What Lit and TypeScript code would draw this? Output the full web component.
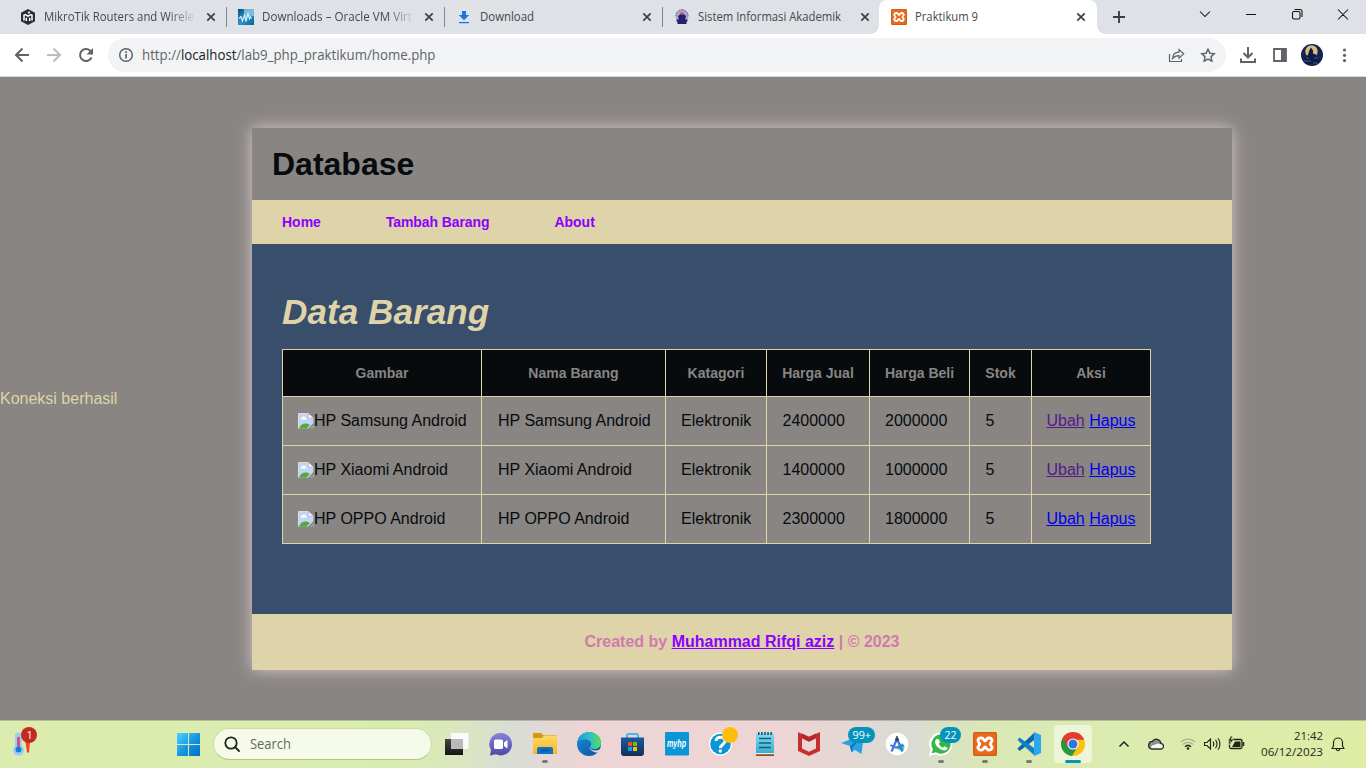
import { LitElement, html, css } from "lit";
import { customElement } from "lit/decorators.js";
import { classMap } from "lit/directives/class-map.js";

// A label stretched to an exact run length, for the system UI typeface.
const label = (text: unknown, width: number, cls: string, height = 20, base = 14) => html`
  <svg class=${cls} width=${width + 1} height=${height}>
    <text x="0" y=${base} textLength=${width} lengthAdjust="spacingAndGlyphs">${text}</text>
  </svg>`;

const xamppIcon = (size: number) => html`
  <svg width=${size} height=${size} viewBox="0 0 16 16">
    <rect width="16" height="16" rx="1.2" fill="#ea6a1c" />
    <rect x=".5" y=".5" width="15" height="15" rx="1" fill="none" stroke="#c9581a" stroke-width=".7" />
    <path d="M5.200 4h-.2a1.700 1.700 0 0 0-1.200 2.900c.9.800.9 1.400 0 2.200a1.700 1.700 0 0 0 1.200 2.900h.8c1.300 0 1.200-2 2.200-2s.9 2 2.200 2h.8a1.700 1.700 0 0 0 1.200-2.900c-.9-.8-.9-1.400 0-2.200a1.700 1.700 0 0 0-1.200-2.900h-.8c-1.300 0-1.200 2-2.200 2s-.9-2-2.200-2z"
      fill="none" stroke="#fff" stroke-width="1.900" stroke-linejoin="round" />
  </svg>`;

const closeIcon = html`
  <svg class="close" width="10" height="10" viewBox="0 0 10 10">
    <path d="M1.300 1.300l7.400 7.400M8.700 1.300L1.300 8.700" stroke="#3c4043" stroke-width="1.700" />
  </svg>`;

@customElement("browser-tabs")
class BrowserTabs extends LitElement {
  static styles = css`
    :host { display: block; height: 34px; background: #dee1e6; font-family: "Open Sans", "Noto Sans", sans-serif; }
    svg { display: block; flex: none; overflow: visible; }
    .strip { display: flex; height: 34px; padding-left: 8px; }
    .tab { display: flex; align-items: center; box-sizing: border-box; width: 218px; padding-left: 12px; position: relative; }
    .line::after { content: ""; position: absolute; right: -1px; top: 7px; width: 1px; height: 20px; background: #80868b; }
    .title { flex: 1; min-width: 0; margin-left: 8px; }
    .text { font-size: 12px; fill: #45484c; }
    .fade { -webkit-mask-image: linear-gradient(90deg, #000 125px, transparent 153px); mask-image: linear-gradient(90deg, #000 125px, transparent 153px); }
    .close { margin-right: 10px; }
    .active .close { margin-right: 11px; }
    .active { background: #fff; border-radius: 8px 8px 0 0; margin-left: -1px; }
    .active::before, .active::after { content: ""; position: absolute; bottom: 0; width: 8px; height: 8px; }
    .active::before { left: -8px; background: radial-gradient(circle at 0 0, transparent 7.5px, #fff 8px); }
    .active::after { right: -8px; background: radial-gradient(circle at 100% 0, transparent 7.5px, #fff 8px); }
    .plus { margin: 10px 0 0 15px; }
    .controls { display: flex; margin-left: auto; }
  `;
  render() {
    const tabs = [
      { t: "MikroTik Routers and Wirele", w: 150, fade: true, icon: html`<svg width="16" height="16" viewBox="0 0 16 16">
          <path d="M8 0l7 3.800v8.400L8 16l-7-3.800V3.800z" fill="#272f38" />
          <path d="M4 11.500V6.200L5.200 5.500 8 7.200l2.800-1.700 1.200.7v5.300M6.300 12V8.800M9.700 12V8.800M8 4l1.800-1" fill="none" stroke="#fff" stroke-width="1.500" /></svg>` },
      { t: "Downloads – Oracle VM Virt", w: 150, fade: true, icon: html`<svg width="16" height="16" viewBox="0 0 16 16">
          <defs><linearGradient id="vb" x2="1" y2="1"><stop stop-color="#0b4a80" /><stop offset=".5" stop-color="#2d94cd" /><stop offset="1" stop-color="#0a5c98" /></linearGradient></defs>
          <rect width="16" height="16" fill="url(#vb)" /><path d="M6 0h10v7L6 9z" fill="#9ed5ef" opacity=".65" />
          <path d="M1 9.500l2-2 1.500 4.500 2-6 1.500 6.500 2-8 1.500 5.500 1-2 1 1.500" fill="none" stroke="#d7f2fc" stroke-width="1.100" /></svg>` },
      { t: "Download", w: 54, icon: html`<svg width="16" height="16" viewBox="0 0 16 16">
          <path d="M6 2h4v4h3.200L8 11.200 2.800 6H6zM3 13h10v1.300H3z" fill="#1a73e8" /></svg>` },
      { t: "Sistem Informasi Akademik", w: 143, icon: html`<svg width="16" height="16" viewBox="0 0 16 16">
          <path d="M8 .5c4 0 6.500 3 6.500 6.500 0 2-.7 3-1.500 4H3C2.200 10 1.500 9 1.500 7 1.500 3.500 4 .5 8 .5z" fill="#a9a7cb" />
          <path d="M8 .8c3.700 0 6 2.800 6 6.200M2 7C2 3.600 4.300.8 8 .8" fill="none" stroke="#6b68a8" stroke-dasharray="1 .7" />
          <path d="M4 7l4-3 4 3-1 4H5zM2.500 10.500h11v2h-1v2.500h-9v-2.500h-1z" fill="#24206f" /><circle cx="8" cy="4.300" r="1.500" fill="#e4554b" /></svg>` },
      { t: "Praktikum 9", w: 63, active: true, icon: xamppIcon(16) },
    ];
    return html`<div class="strip">
      ${tabs.map((t, i) => html`<div class=${classMap({ tab: true, active: !!t.active, line: i < 3 })}>
        ${t.icon}<div class=${classMap({ title: true, fade: !!t.fade })}>${label(t.t, t.w, "text", 20, 14)}</div>${closeIcon}
      </div>`)}
      <svg class="plus" width="14" height="14" viewBox="0 0 14 14"><path d="M7 1v12M1 7h12" stroke="#3c4043" stroke-width="1.900" /></svg>
      <div class="controls">
        <svg width="184" height="34" viewBox="1182 0 184 34" fill="none" stroke="#111" stroke-width="1.050">
          <path d="M1200 11.500l5 5 5-5M1246 14.500h10M1338 9.500l10 10M1348 9.500l-10 10" />
          <rect x="1292.500" y="11.500" width="7.500" height="7.500" rx="1.500" />
          <path d="M1294.500 9.500h5.500a2 2 0 0 1 2 2v5.500" />
        </svg>
      </div>
    </div>`;
  }
}

@customElement("browser-toolbar")
class BrowserToolbar extends LitElement {
  static styles = css`
    :host { display: block; font-family: "Open Sans", "Noto Sans", sans-serif; }
    svg { display: block; flex: none; overflow: visible; }
    .bar { box-sizing: border-box; height: 43px; background: #fff; border-bottom: 1px solid #d5d6d9; display: flex; align-items: center; }
    .omni { display: flex; align-items: center; width: 1118px; height: 34px; border-radius: 17px; background: #f1f3f4; }
    .url { margin-left: 8px; font-size: 14px; fill: #5f6368; }
    .host { fill: #202124; }
    .share { margin-left: auto; }
  `;
  render() {
    return html`<div class="bar">
      <svg width="108" height="42" viewBox="0 34 108 42" fill="none" stroke="#5f6368" stroke-width="2">
        <path d="M29 55H16.500M22.500 48.500L16 55l6.500 6.500" />
        <path d="M47 55h12.500M53.500 48.500L60 55l-6.500 6.500" stroke="#babcbe" />
        <path d="M91.500 57.500a6 6 0 1 1-1.300-6.800l1.500 1.500" /><path d="M93 48v6.500h-6.500z" fill="#5f6368" stroke="none" />
      </svg>
      <div class="omni">
        <svg width="26" height="34" viewBox="108 38 26 34"><circle cx="126" cy="55" r="6.300" fill="none" stroke="#5f6368" stroke-width="1.500" /><path d="M125.200 54h1.700v4.500h-1.700zM125.200 51.300h1.700v1.600h-1.700z" fill="#5f6368" /></svg>
        <svg class="url" width="300" height="24"><text x="0" y="17" textLength="293.500" lengthAdjust="spacingAndGlyphs">http://<tspan class="host">localhost</tspan>/lab9_php_praktikum/home.php</text></svg>
        <svg class="share" width="66" height="34" viewBox="1160 38 66 34" fill="none" stroke="#5f6368">
          <path d="M1169.500 54v7.500h12V59" stroke-width="1.200" />
          <path d="M1172.500 58.500c.3-4 2.500-6.200 6.500-6.300v-2.700l4.700 4.300-4.700 4.300v-2.500c-3 0-4.800.9-6.500 2.900z" stroke-width="1.200" />
          <path d="M1208 49.300l1.900 4 4.300.5-3.200 3 .8 4.300-3.800-2.100-3.800 2.100.8-4.300-3.200-3 4.300-.5z" stroke-width="1.500" />
        </svg>
      </div>
      <svg width="140" height="42" viewBox="1226 34 140 42">
        <path d="M1248 47v10M1243.500 53l4.500 4.500 4.500-4.500M1241 58.500v3.500h14v-3.500" fill="none" stroke="#5f6368" stroke-width="2" />
        <path d="M1274 49h12v12h-12z" fill="none" stroke="#5f6368" stroke-width="1.800" /><path d="M1281 49h5v12h-5z" fill="#5f6368" />
        <circle cx="1312" cy="55" r="11" fill="#16214f" /><circle cx="1311.500" cy="51.500" r="6.200" fill="#d8bd83" />
        <path d="M1303 61l2-3 1-2 2-1 1-4 2-3.500 2 3 0 3 3 1 1 3 3 3.500-4 3h-10z" fill="#111a42" /><path d="M1304 61h7M1313 63h5M1306 57.500l3 1M1314 58h4" stroke="#355ca0" />
        <g fill="#5f6368"><circle cx="1344.500" cy="50" r="1.600" /><circle cx="1344.500" cy="55.300" r="1.600" /><circle cx="1344.500" cy="60.600" r="1.600" /></g>
      </svg>
    </div>`;
  }
}

const brokenImage = html`<svg class="broken" width="16" height="16" viewBox="0 0 16 16">
  <path d="M.5.500h10l5 5v10H.5z" fill="#c2d5f5" />
  <path d="M.5 15.500V.500h10" fill="none" stroke="#d8dbe0" /><path d="M10.500.500v4.500h5z" fill="#fff" stroke="#b5b8bd" stroke-width=".8" />
  <path d="M2.500 6.500c0-1.500 1.300-1.700 1.600-1.700.4-1.600 2.900-1.600 3.200 0 1.700 0 1.700 1.700.9 1.700z" fill="#fff" />
  <path d="M1 15.500c1-3.500 4-5.500 8-5l3 1.500-3.500 3.500z" fill="#53aa36" />
  <path d="M16 9.500L10 16h2l4-4z" fill="#888583" /><path d="M12.500 15.500l2.500-2 .5 2z" fill="#53aa36" />
</svg>`;

@customElement("data-page")
class DataPage extends LitElement {
  static styles = css`
    :host { display: block; font-family: "Liberation Sans", Arial, sans-serif; font-size: 16px; }
    .page { height: 643px; display: flex; align-items: center; background: #888583; color: #dfd3aa; overflow: hidden; }
    .status { width: 118px; white-space: nowrap; line-height: 18px; }
    .card { width: 980px; margin: 1px auto 0; box-shadow: 0 0 15px #d9c8cb; }
    .head { height: 72px; background: #888583; padding-left: 20px; display: flex; align-items: center; box-sizing: border-box; }
    .brand { margin: 0; font-size: 32px; line-height: 36px; color: #070b0d; }
    .nav { height: 44px; background: #dfd3aa; display: flex; align-items: center; gap: 65px; padding-left: 30px; box-sizing: border-box; font-size: 14px; font-weight: bold; color: #8b00ff; }
    .wide { letter-spacing: -0.1px; }
    .main { box-sizing: border-box; height: 370px; padding: 47px 30px 0; background: #384e6a; }
    .title { margin: 0 0 17px; font-size: 35.2px; line-height: 41px; font-style: italic; }
    .table { table-layout: fixed; width: 869px; border-collapse: collapse; color: #070b0d; }
    .table th, .table td { border: 1px solid #dfd3aa; padding: 15px 0 15px 15px; white-space: nowrap; text-align: left; line-height: 18px; }
    .table th { background: #070b0d; color: #888583; font-size: 14px; line-height: 16px; text-align: center; padding: 15px 0; }
    .table td { background: #888583; }
    .table .name { padding-left: 16px; }
    .table .num { padding-left: 15.5px; }
    .table .links { padding-left: 14.5px; }
    .pic { display: flex; align-items: center; height: 18px; }
    .broken { display: block; margin-top: -1px; }
    .link { color: #0000ee; text-decoration: underline; }
    .visited { color: #551a8b; }
    .foot { height: 56px; background: #dfd3aa; display: flex; align-items: center; justify-content: center; font-weight: bold; color: #d07ab0; white-space: pre; padding-bottom: 1px; box-sizing: border-box; }
    .author { color: #8b00ff; text-decoration: underline; }
  `;
  render() {
    const cols = [199, 184, 101, 103, 100, 62, 119];
    const heads = ["Gambar", "Nama Barang", "Katagori", "Harga Jual", "Harga Beli", "Stok", "Aksi"];
    const rows = [
      { n: "HP Samsung Android", j: 2400000, b: 2000000, v: true },
      { n: "HP Xiaomi Android", j: 1400000, b: 1000000, v: true },
      { n: "HP OPPO Android", j: 2300000, b: 1800000, v: false },
    ];
    return html`<div class="page">
      <div class="status">Koneksi berhasil</div>
      <div class="card">
        <div class="head"><h1 class="brand">Database</h1></div>
        <div class="nav"><span>Home</span><span class="wide">Tambah Barang</span><span>About</span></div>
        <div class="main">
          <h2 class="title">Data Barang</h2>
          <table class="table">
            <colgroup>${cols.map((w) => html`<col style="width:${w}px" />`)}</colgroup>
            <thead><tr>${heads.map((h) => html`<th>${h}</th>`)}</tr></thead>
            <tbody>${rows.map((r) => html`<tr>
              <td><div class="pic">${brokenImage}${r.n}</div></td><td class="name">${r.n}</td><td>Elektronik</td><td class="num">${r.j}</td><td>${r.b}</td><td class="num">5</td>
              <td class="links"><span class=${classMap({ link: true, visited: r.v })}>Ubah</span> <span class="link">Hapus</span></td>
            </tr>`)}</tbody>
          </table>
        </div>
        <div class="foot"><span>Created by </span><span class="author">Muhammad Rifqi aziz</span><span> | © 2023</span></div>
      </div>
    </div>`;
  }
}

@customElement("task-bar")
class TaskBar extends LitElement {
  static styles = css`
    :host { display: block; font-family: "Open Sans", "Noto Sans", sans-serif; }
    svg { display: block; flex: none; overflow: visible; }
    .bar { box-sizing: border-box; height: 48px; border-top: 1px solid rgba(120, 120, 110, 0.4); display: flex;
      background: linear-gradient(90deg, #dcecae 0, #d9ecb0 400px, #dbe8ba 445px, #dadcd6 515px, #ecd5d4 580px, #ecd5d4 800px, #dadbd5 905px, #dae8b4 990px, #dcebb0 1100px, #dfeda6 1366px); }
    .app { width: 44px; height: 47px; position: relative; display: flex; align-items: center; justify-content: center; }
    .left { width: 166px; }
    .search { display: flex; align-items: center; box-sizing: border-box; width: 219px; height: 32px; margin: 7px 2px 0 3px; padding-left: 10px; border-radius: 16px;
      background: rgba(255, 255, 255, 0.72); border: 1px solid #cbdca5; border-bottom-color: #b5c58e; }
    .hint { margin-left: 10px; font-size: 14px; fill: #646a5c; }
    .dot::after { content: ""; position: absolute; left: 20px; top: 39px; width: 6px; height: 3px; border-radius: 2px; background: #7b7d75; }
    .current::before { content: ""; position: absolute; left: 4px; top: 4px; width: 38px; height: 38px; border-radius: 4px; background: rgba(255, 255, 255, 0.5); }
    .current::after { content: ""; position: absolute; left: 15px; top: 39px; width: 16px; height: 3px; border-radius: 2px; background: #0a93b8; }
    .current svg { position: relative; }
    .badge { font-size: 11px; fill: #fff; }
    .logo { font: italic bold 10px "Liberation Sans", sans-serif; fill: #fff; }
    .clock { margin: 8px 0 0; width: 74px; display: flex; flex-direction: column; align-items: flex-end; font-size: 11px; fill: #24281c; }
  `;
  render() {
    const I = (body: unknown, cls = "") => html`<div class="app ${cls}">${body}</div>`;
    return html`<div class="bar">
      <svg class="left" width="166" height="47" viewBox="0 721 166 47">
        <path d="M15 736a3.500 3.500 0 0 1 7 0v10a5.500 5.500 0 1 1-7 0z" fill="#9dcdf4" /><path d="M18.500 738v10" stroke="#d9416c" stroke-width="2.500" stroke-linecap="round" /><circle cx="18.500" cy="749.500" r="3" fill="#1480d8" />
        <path d="M25.500 742h4.500l-1 10.500h-2z" fill="#ef4030" />
        <circle cx="29" cy="735" r="8" fill="#c42b1c" /><text class="badge" x="26.500" y="739">1</text>
      </svg>
      ${I(html`<svg width="44" height="47" viewBox="166 721 44 47"><defs><linearGradient id="win" x2="1" y2="1"><stop stop-color="#50d1ff" /><stop offset=".55" stop-color="#1593e0" /><stop offset="1" stop-color="#006fc9" /></linearGradient></defs>
        <path d="M177 733h11v11h-11zM189 733h11v11h-11zM177 745h11v11h-11zM189 745h11v11h-11z" fill="url(#win)" /></svg>`)}
      <div class="search">
        <svg width="16" height="16" viewBox="0 0 16 16" fill="none" stroke="#202419" stroke-width="1.800"><circle cx="7" cy="7" r="5.700" /><path d="M11 11l4 4" stroke-linecap="round" /></svg>
        ${label("Search", 41, "hint", 22, 16)}
      </div>
      ${I(html`<svg width="44" height="47" viewBox="434 721 44 47"><defs><linearGradient id="tv" x2="0" y2="1"><stop stop-color="#454545" /><stop offset="1" stop-color="#151515" /></linearGradient></defs>
        <path d="M445 739h18v16h-18z" fill="url(#tv)" /><path d="M451 733h17.500v16H451z" fill="#fbfbfb" /><path d="M451 739h12v10h-12z" fill="#b9b9b9" /></svg>`)}
      ${I(html`<svg width="44" height="47" viewBox="478 721 44 47"><defs><linearGradient id="chat" x2="0" y2="1"><stop stop-color="#8583dc" /><stop offset="1" stop-color="#5048a8" /></linearGradient></defs>
        <path d="M501 733a11.200 11.200 0 1 1-5 21.300l-6 1.200 1-5.500a11.200 11.200 0 0 1 10-17z" fill="url(#chat)" /><rect x="494" y="739.500" width="9" height="9.500" rx="1.500" fill="#fff" /><path d="M504 742.500l3.500-2.500v8.500l-3.500-2.500z" fill="#fff" /></svg>`)}
      ${I(html`<svg width="44" height="47" viewBox="522 721 44 47"><defs><linearGradient id="fold" x2="0" y2="1"><stop stop-color="#ffd968" /><stop offset="1" stop-color="#f7b820" /></linearGradient></defs>
        <path d="M533 734q0-1 1-1h7l2 2h13.500v5H533z" fill="#d8960e" /><path d="M533 738h9l2-2.500h12q1 0 1 1V754H533z" fill="url(#fold)" /><path d="M537 754v-5q0-2 2-2h12q2 0 2 2v5z" fill="#0e70c8" /><path d="M541 750.500h8" stroke="#0a4f98" stroke-width="1.500" /></svg>`, "dot")}
      ${I(html`<svg width="44" height="47" viewBox="566 721 44 47"><defs>
        <linearGradient id="e1" x2="1"><stop stop-color="#1b9de2" /><stop offset=".6" stop-color="#32c5b8" /><stop offset="1" stop-color="#5fdb55" /></linearGradient>
        <linearGradient id="e2" x2="1" y2="1"><stop stop-color="#1c8fdb" /><stop offset="1" stop-color="#0b4f9e" /></linearGradient></defs>
        <circle cx="589" cy="744" r="12" fill="url(#e2)" />
        <path d="M577.500 741c2-5.500 6.500-9 11.500-9 7 0 12 5 12 11 0 3.500-2.500 6-6.500 6-3 0-5-1-4-2.500 2-3 0-7-5-7-3.500 0-6.300.8-8 1.500z" fill="url(#e1)" />
        <path d="M589 742.500c-1.500 4.500 2 8.500 7 8 2 0 3.500-.6 4.500-1.400l1 1-1.500 2.200c-6 1.500-13-3-11-9.800z" fill="#ecd5d4" /></svg>`)}
      ${I(html`<svg width="44" height="47" viewBox="610 721 44 47"><defs><linearGradient id="st" x2="0" y2="1"><stop stop-color="#1b5aa4" /><stop offset="1" stop-color="#162d56" /></linearGradient></defs>
        <path d="M627 738v-2.500q0-1.500 1.500-1.500h8q1.500 0 1.500 1.500v2.500" fill="none" stroke="#42b8ea" stroke-width="2" /><path d="M621 737.500h23V753q0 3-3 3h-17q-3 0-3-3z" fill="url(#st)" />
        <path d="M628 742h4v4h-4z" fill="#f25022" /><path d="M633 742h4v4h-4z" fill="#7fba00" /><path d="M628 747h4v4h-4z" fill="#00a4ef" /><path d="M633 747h4v4h-4z" fill="#ffb900" /></svg>`)}
      ${I(html`<svg width="44" height="47" viewBox="654 721 44 47"><rect x="665" y="732" width="24" height="23.500" rx="1" fill="#0a96d6" /><text class="logo" x="667" y="747" textLength="19" lengthAdjust="spacingAndGlyphs">myhp</text></svg>`)}
      ${I(html`<svg width="44" height="47" viewBox="698 721 44 47"><circle cx="720.500" cy="744" r="11.500" fill="#fff" /><circle cx="720.500" cy="744" r="10.300" fill="#0a96d6" />
        <path d="M716 741c0-5 9-5 9 0 0 3.500-4.500 3.500-4.500 7" fill="none" stroke="#fff" stroke-width="3" /><circle cx="720.300" cy="751" r="1.700" fill="#fff" /><circle cx="730" cy="735" r="8" fill="#ffbe0b" /></svg>`)}
      ${I(html`<svg width="44" height="47" viewBox="742 721 44 47"><defs><linearGradient id="np" x2="0" y2="1"><stop stop-color="#7fdcee" /><stop offset="1" stop-color="#37a9cd" /></linearGradient></defs>
        <path d="M756 733.500h18V754h-18z" fill="url(#np)" /><path d="M756 754h18v2h-18z" fill="#9a4a12" /><path d="M756 753.200h18v1h-18z" fill="#fff" /><path d="M759 738.500h12M759 743h12M759 747.500h12" stroke="#13627c" stroke-width="1.300" /><path d="M758 733.500h14" stroke="#135068" stroke-width="3" stroke-dasharray="1.500 1.600" /></svg>`)}
      ${I(html`<svg width="44" height="47" viewBox="786 721 44 47"><path d="M798 732l11 5 11-5v19l-11 5-11-5z" fill="#c5302f" /><path d="M802 738l7 3.500 7-3.500v10.500l-7 3.300-7-3.300z" fill="#ecd7d4" /><path d="M802 733.500v4.800l7 3.500 7-3.500v-4.800l-7 3.300z" fill="#b62828" /></svg>`)}
      ${I(html`<svg width="44" height="47" viewBox="830 721 44 47"><path d="M841 743l23-9-2.500 20-6.500-4-3.500 2.500-1.500-6.500z" fill="#28a4e4" /><path d="M850 746l9-6-6.500 7.500-1 5z" fill="#1474b4" />
        <rect x="848" y="727" width="27" height="16" rx="8" fill="#0494ba" /><text class="badge" x="852.500" y="739" textLength="18.500" lengthAdjust="spacingAndGlyphs">99+</text></svg>`)}
      ${I(html`<svg width="44" height="47" viewBox="874 721 44 47"><circle cx="897" cy="744" r="11.200" fill="#fff" /><circle cx="901" cy="747" r="3.500" fill="#3ddc84" /><path d="M896.500 740l-5 11.500M897.500 740l5 11.500M890.500 745q6.500 5 13 0" fill="none" stroke="#3979e6" stroke-width="2.200" /><circle cx="897" cy="739.500" r="2" fill="#35465a" /><path d="M897 736v3" stroke="#35465a" stroke-width="1.500" /></svg>`)}
      ${I(html`<svg width="44" height="47" viewBox="918 721 44 47"><path d="M941 732.500a11.500 11.500 0 1 1-5.500 21.700l-6.500 1.800 1.700-6.200A11.500 11.500 0 0 1 941 732.500z" fill="#fff" /><path d="M941 734.500a9.600 9.600 0 1 1-5 17.800l-4.300 1 1.200-4.200A9.600 9.600 0 0 1 941 734.500z" fill="#34b849" />
        <path d="M937 739l1.800.2 1.200 3-1.200 1.500c1 2 2.200 3 4.200 4l1.500-1.500 3 1.500c0 2-2 3-4 2.500-5-1.200-8-4.500-8.500-8 0-1.500.8-2.700 2-3.200z" fill="#fff" />
        <rect x="940" y="727" width="21" height="16" rx="8" fill="#0494ba" /><text class="badge" x="944.500" y="739" textLength="12" lengthAdjust="spacingAndGlyphs">22</text></svg>`, "dot")}
      ${I(html`<svg width="44" height="47" viewBox="962 721 44 47"><svg x="973" y="732" width="24" height="24">${xamppIcon(24)}</svg></svg>`, "dot")}
      ${I(html`<svg width="44" height="47" viewBox="1006 721 44 47"><path d="M1035 732l-17.500 16.500 2 2.500 16-12z" fill="#0a66ad" /><path d="M1019.500 737.500l-2 2.500 17.500 16 .5-7z" fill="#1480c9" /><path d="M1034 732l7 3v18l-7 3.200z" fill="#2aa7ef" /></svg>`, "dot")}
      ${I(html`<svg width="44" height="47" viewBox="1050 721 44 47"><circle cx="1073" cy="744" r="12" fill="#fbc116" />
        <path d="M1073 744L1062.600 738A12 12 0 0 1 1083.400 738L1084 739.500H1073z" fill="#e33b2e" /><path d="M1073 744l-10.400-6a12 12 0 0 0 9.400 18l6-10z" fill="#229a48" /><path d="M1062.600 738l5.500 9.500 5-8h10.300a12 12 0 0 0-20.800-1.500z" fill="#e33b2e" />
        <circle cx="1073" cy="744" r="5.600" fill="#fff" /><circle cx="1073" cy="744" r="4.500" fill="#3474e0" /></svg>`, "current")}
      <svg width="156" height="47" viewBox="1094 721 156 47" fill="none" stroke="#20251a" stroke-width="1.300">
        <path d="M1119.500 746.500l4.500-4.500 4.500 4.500" stroke-width="1.500" />
        <path d="M1152 749h8.500c3.700 0 3.700-5 .5-5.300-.5-4.700-6.500-6.200-8.500-2.300-4.500-.2-5.500 7.600-.5 7.600z" fill="#8b8d8b" /><path d="M1152 748.300h9c2.500 0 2.300-4 0-4.100l-3.300-.8-5.700 2.100q-2 1.500 0 2.800z" fill="#f3f3f3" stroke="none" />
        <path d="M1181 742a10 10 0 0 1 14 0M1183 744.500a7 7 0 0 1 10 0" stroke="#a9b38b" /><path d="M1185 746.700a4.500 4.500 0 0 1 6 0" stroke-width="1.500" /><circle cx="1188" cy="748.500" r="1.300" fill="#20251a" stroke="none" />
        <path d="M1204.500 742.500h2.500l3.500-3.500v10l-3.500-3.500h-2.500zM1213 741.500q1.800 2.500 0 5M1215.500 739.700q3 4.300 0 8.600M1218 738.200q4 5.800 0 11.600" stroke-width="1.100" />
        <rect x="1229.500" y="739.500" width="12.500" height="9" rx="1.500" /><path d="M1235 741.500h5.500v5.500h-8.500z" fill="#20251a" stroke="none" /><path d="M1243.500 742v4" stroke-width="1.500" /><path d="M1231 736l-3 5h2.500l-1 4 4-5.500h-2.500l1.500-3.500z" fill="#20251a" stroke="#dcebb0" stroke-width=".5" />
      </svg>
      <div class="clock">${label("21:42", 29, "time", 16, 11)}${label("06/12/2023", 62, "date", 16, 11)}</div>
      <svg width="42" height="47" viewBox="1324 721 42 47" fill="none" stroke="#20251a" stroke-width="1.200"><path d="M1332 748.500h12l-1.500-2.500v-3.500a4.500 4.500 0 0 0-9 0v3.500zM1336 749q2 3.500 4 0" stroke-linejoin="round" /></svg>
    </div>`;
  }
}

@customElement("app-root")
class AppRoot extends LitElement {
  static styles = css`
    :host { display: block; width: 1366px; height: 768px; overflow: hidden; }
  `;
  render() {
    return html`<browser-tabs></browser-tabs><browser-toolbar></browser-toolbar><data-page></data-page><task-bar></task-bar>`;
  }
}
